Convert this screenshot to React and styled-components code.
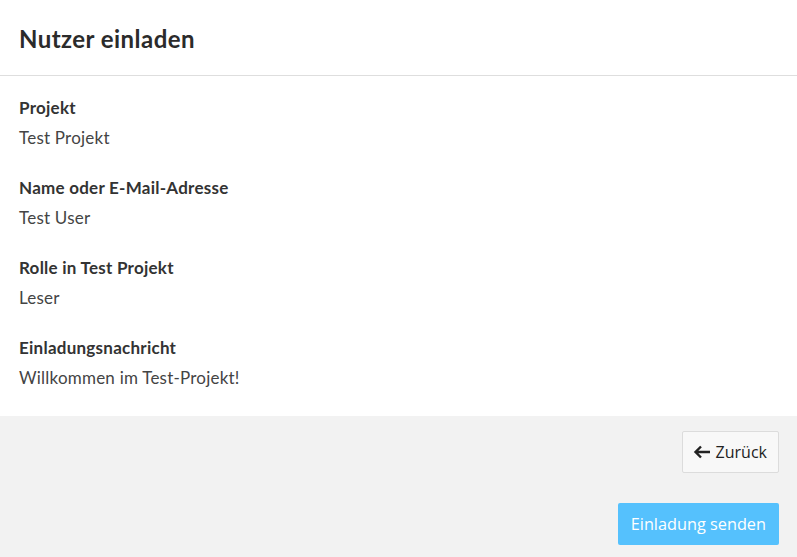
import React from 'react';
import styled, { createGlobalStyle } from 'styled-components';

const GlobalStyle = createGlobalStyle`
  html, body {
    margin: 0;
    padding: 0;
    background: #f2f2f2;
  }
  body {
    font-family: Lato, "Open Sans", sans-serif;
    color: #333;
  }
`;

const fields = [
  { label: 'Projekt', value: 'Test Projekt' },
  { label: 'Name oder E-Mail-Adresse', value: 'Test User' },
  { label: 'Rolle in Test Projekt', value: 'Leser' },
  { label: 'Einladungsnachricht', value: 'Willkommen im Test-Projekt!' },
];

export default function App() {
  return (
    <>
      <GlobalStyle />
      <Dialog>
        <Header>
          <Title>Nutzer einladen</Title>
        </Header>
        <Body>
          {fields.map((f) => (
            <Field key={f.label}>
              <Label>{f.label}</Label>
              <Value>{f.value}</Value>
            </Field>
          ))}
        </Body>
        <Footer>
          <BackButton type="button">
            <svg width="18" height="14" viewBox="0 0 18 14" aria-hidden="true">
              <path
                d="M17 7H2.5M8 1.5L2.5 7L8 12.5"
                fill="none"
                stroke="#222"
                strokeWidth="2.4"
              />
            </svg>
            Zurück
          </BackButton>
          <SendButton type="button">Einladung senden</SendButton>
        </Footer>
      </Dialog>
    </>
  );
}

const Dialog = styled.div`
  display: flex;
  flex-direction: column;
  min-height: 557px;
`;

const Header = styled.header`
  background: #fff;
  height: 75px;
  border-bottom: 1px solid #dedede;
  display: flex;
  align-items: center;
  padding: 0 19px;
`;

const Title = styled.h1`
  margin: 0;
  font-size: 24px;
  letter-spacing: 0.45px;
  font-weight: 700;
  color: #2b2b2b;
  padding-top: 1px;
`;

const Body = styled.section`
  background: #fff;
  padding: 20px 19px 26px;
  display: flex;
  flex-direction: column;
  gap: 26px;
`;

const Field = styled.div`
  display: flex;
  flex-direction: column;
  gap: 6px;
`;

const Label = styled.div`
  font-size: 17px;
  line-height: 24px;
  letter-spacing: 0.25px;
  font-weight: 700;
  color: #333;
`;

const Value = styled.div`
  font-size: 17px;
  line-height: 24px;
  letter-spacing: 0.22px;
  color: #444;
`;

const Footer = styled.footer`
  flex: 1;
  background: #f2f2f2;
  display: flex;
  flex-direction: column;
  align-items: flex-end;
  gap: 30px;
  padding: 15px 18px 12px;
`;

const BaseButton = styled.button`
  font-family: "Open Sans", "Segoe UI", sans-serif;
  font-size: 16px;
  height: 42px;
  border-radius: 2px;
  display: inline-flex;
  align-items: center;
  cursor: pointer;
`;

const BackButton = styled(BaseButton)`
  background: #f8f8f8;
  border: 1px solid #dcdcdc;
  color: #222;
  padding: 0 11px 0 10px;
  gap: 5px;
`;

const SendButton = styled(BaseButton)`
  background: #55c1fd;
  border: none;
  color: #fff;
  font-size: 16.3px;
  padding: 0 13px;
`;
